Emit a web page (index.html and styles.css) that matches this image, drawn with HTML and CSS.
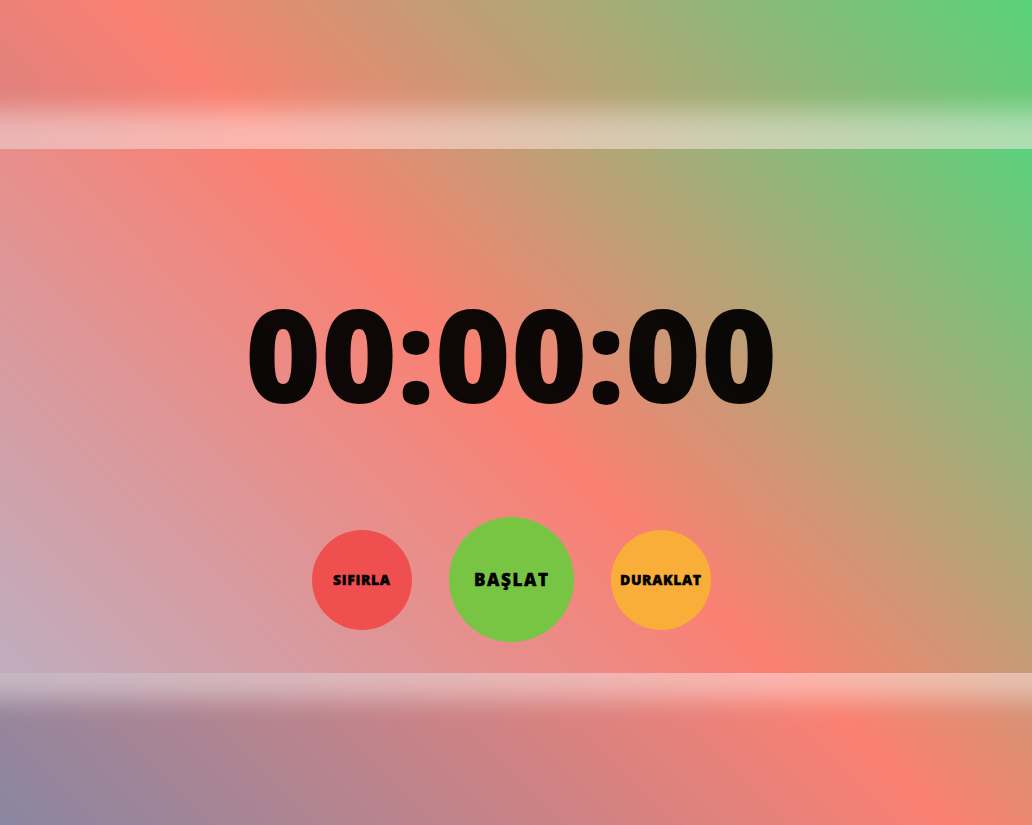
FILE: index.html
```html
<!DOCTYPE html>
<html lang="tr">
<head>
<meta charset="utf-8">
<title>Kronometre</title>
<link rel="stylesheet" href="styles.css">
</head>
<body>
<div class="page">
  <header class="top"></header>
  <main class="stage">
    <div class="timer">00:00:00</div>
    <div class="controls">
      <button class="btn btn-reset">SIFIRLA</button>
      <button class="btn btn-start">BAŞLAT</button>
      <button class="btn btn-pause">DURAKLAT</button>
    </div>
  </main>
  <footer class="bottom"></footer>
</div>
</body>
</html>
```
FILE: styles.css
```css
html, body {
  margin: 0;
  padding: 0;
  height: 100%;
}
body {
  font-family: "Open Sans", "DejaVu Sans", sans-serif;
  background: linear-gradient(45deg, #8a86a1 0%, #fa8072 51%, #58d37a 100%);
  overflow: hidden;
}
.page {
  display: flex;
  flex-direction: column;
  height: 825px;
}
.top {
  height: 149px;
  flex: none;
}
.stage {
  height: 524px;
  flex: none;
  box-sizing: border-box;
  padding: 139px 10px 0 0;
  display: flex;
  flex-direction: column;
  align-items: center;
  background: linear-gradient(45deg, #c0adbf 0%, #fa8072 50%, #5bd27c 100%);
  box-shadow: 0 -6px 24px 32px rgba(255, 255, 255, 0.42);
  position: relative;
}
.bottom {
  flex: 1;
}
.timer {
  font-size: 130px;
  line-height: 1;
  font-weight: 800;
  color: rgba(0, 0, 0, 0.95);
}
.controls {
  margin-top: 99px;
  display: flex;
  align-items: center;
  gap: 37px;
}
.btn {
  border: none;
  border-radius: 50%;
  width: 100px;
  height: 100px;
  padding: 0 0 0 0.6px;
  font-family: "Open Sans", "DejaVu Sans", sans-serif;
  font-weight: 800;
  font-size: 14px;
  letter-spacing: 0.6px;
  -webkit-text-stroke: 0.4px #000;
  color: #000;
  cursor: pointer;
}
.btn-reset {
  background: #f04f4f;
}
.btn-start {
  width: 125px;
  height: 125px;
  padding-left: 1.6px;
  font-size: 17px;
  letter-spacing: 1.6px;
  background: #78c443;
}
.btn-pause {
  background: #f9ae3a;
}
```
